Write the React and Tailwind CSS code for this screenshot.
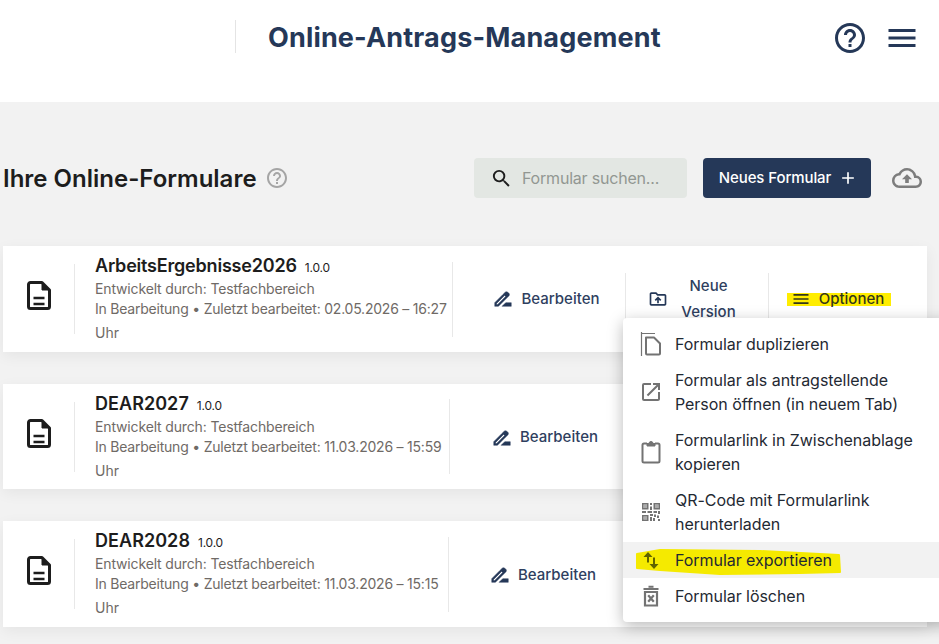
import React from 'react';
import {
  MdAdd,
  MdHelpOutline,
  MdMenu,
  MdOpenInNew,
  MdOutlineCloudUpload,
  MdOutlineDriveFolderUpload,
  MdSearch
} from 'react-icons/md';

const forms = [
  {
    name: 'ArbeitsErgebnisse2026',
    edited: '02.05.2026 – 16:27',
    card: 'h-[106px]',
    textCol: 'w-[378px]',
    editCol: 'w-[172px] pl-[14px]',
    nameTrack: 'tracking-[-0.2px]'
  },
  {
    name: 'DEAR2027',
    edited: '11.03.2026 – 15:59',
    card: 'h-[105px]',
    textCol: 'w-[375px]',
    editCol: 'w-[175px] pl-[14px] pt-[2px]',
    nameTrack: 'tracking-[0.05px]'
  },
  {
    name: 'DEAR2028',
    edited: '11.03.2026 – 15:15',
    card: 'h-[106px]',
    textCol: 'w-[374px]',
    editCol: 'w-[176px] pl-[11px] pt-[2px]',
    nameTrack: 'tracking-[0.05px]'
  }
];

const DocIcon = () => (
  <svg viewBox="0 0 24 29" className="h-[29px] w-6 text-[#1d1d1d]" fill="none" stroke="currentColor">
    <path d="M3.5 1.5H15L22.5 9V25.5A2 2 0 0 1 20.5 27.5H3.5A2 2 0 0 1 1.5 25.5V3.5A2 2 0 0 1 3.5 1.5Z" strokeWidth="3" strokeLinejoin="round" />
    <path d="M15 2V9H22Z" fill="currentColor" strokeWidth="1" />
    <path d="M6.5 17H17.5M6.5 23H17.5" strokeWidth="2.4" />
  </svg>
);

const PenIcon = () => (
  <svg viewBox="0 0 24 24" className="h-[22px] w-[22px] text-[#253858]" fill="currentColor" stroke="currentColor" strokeWidth="0.5">
    <path fillRule="evenodd" d="M18.41 5.8L17.2 4.59c-.78-.78-2.05-.78-2.83 0l-2.68 2.68L3 15.96V20h4.04l8.74-8.74 2.63-2.63c.79-.78.79-2.05 0-2.83zM6.21 18H5v-1.21l8.66-8.66 1.21 1.21L6.21 18z" />
    <path d="M11 20l4-4h6v4H11z" />
  </svg>
);

const CopyIcon = ({ className }) => (
  <svg viewBox="0 0 24 24" className={className} fill="none" stroke="currentColor">
    <path d="M2.5 0V24M2.5 1.5H16" strokeWidth="1.2" />
    <path d="M7 5.5H15L21 11.5V21.5A1 1 0 0 1 20 22.5H8A1 1 0 0 1 7 21.5Z" strokeWidth="2" strokeLinejoin="round" />
  </svg>
);

const ClipboardIcon = ({ className }) => (
  <svg viewBox="0 0 24 24" className={className} fill="none" stroke="currentColor">
    <path d="M8 3.5H5A1.5 1.5 0 0 0 3.5 5V21A1.5 1.5 0 0 0 5 22.5H19A1.5 1.5 0 0 0 20.5 21V5A1.5 1.5 0 0 0 19 3.5H16" strokeWidth="2" />
    <path d="M8 6V3.5H10A2 2 0 0 1 14 3.5H16V6Z" fill="currentColor" strokeWidth="1" strokeLinejoin="round" />
  </svg>
);

const QrIcon = ({ className }) => (
  <svg viewBox="0 0 24 24" className={className} fill="currentColor">
    <path fillRule="evenodd" d="M3 3H9.5V9.5H3ZM4.5 4.5V8H8V4.5Z M14.5 3H21V9.5H14.5ZM16 4.5V8H19.5V4.5Z M3 15H9.5V21H3ZM4.5 16.5V19.5H8V16.5Z" />
    <path opacity="0.6" d="M4.5 4.5H8V8H4.5ZM16 4.5H19.5V8H16ZM4.5 16.5H8V19.5H4.5Z" />
    <path d="M11 3H13V5H11ZM11 6.5H13V10H11ZM3 11H7V13H3ZM8.5 11H13V13H8.5ZM14.5 11H18V13H14.5ZM19 11H21V14H19ZM11 14H14V16H11ZM11 17H13V21H11ZM15 14.5H17V17H15ZM14 18H16V21H14ZM18 15.5H20V18H18ZM19 19H21V21H19Z" />
  </svg>
);

const SortIcon = ({ className }) => (
  <svg viewBox="0 0 24 24" className={className} fill="currentColor">
    <path d="M9 4L13.5 9H10V14.5H8V9H4.5Z" />
    <path d="M15 21L10.5 16H14V9.5H16V16H19.5Z" />
  </svg>
);

const TrashIcon = ({ className }) => (
  <svg viewBox="0 0 24 24" className={className} fill="none" stroke="currentColor">
    <path d="M4.5 5H19.5M9.5 2.8H14.5" strokeWidth="2" />
    <path d="M6 8H18V21.5H6Z" strokeWidth="2.2" />
    <path d="M9.2 11.2L14.8 17.8M14.8 11.2L9.2 17.8" strokeWidth="2.2" />
  </svg>
);

const menuItems = [
  { icon: CopyIcon, lines: ['Formular duplizieren'], row: 'h-[36px]' },
  { icon: MdOpenInNew, lines: ['Formular als antragstellende', 'Person öffnen (in neuem Tab)'], row: 'h-[60px]' },
  { icon: ClipboardIcon, lines: ['Formularlink in Zwischenablage', 'kopieren'], row: 'h-[60px]' },
  { icon: QrIcon, lines: ['QR-Code mit Formularlink', 'herunterladen'], row: 'h-[60px]' },
  { icon: SortIcon, lines: ['Formular exportieren'], row: 'h-[36px] bg-[#f2f2f2]', marked: true },
  { icon: TrashIcon, lines: ['Formular löschen'], row: 'h-[36px]' }
];

const FormCard = ({ form }) => (
  <div className={`flex items-center bg-white shadow-[0_4px_14px_rgba(0,0,0,0.06)] ${form.card}`}>
    <div className="flex h-[70px] w-[72px] shrink-0 items-center justify-center border-r border-[#e8e8e8] pb-[7px]">
      <DocIcon />
    </div>
    <div className={`flex h-[75px] shrink-0 flex-col justify-center whitespace-nowrap border-r border-[#e8e8e8] pl-5 ${form.textCol}`}>
      <div className="flex items-baseline gap-2 leading-[22px]">
        <span className={`text-[18px] font-semibold text-[#1d1d1d] ${form.nameTrack}`}>{form.name}</span>
        <span className="text-[12px] tracking-[-0.2px] text-[#1d1d1d]">1.0.0</span>
      </div>
      <p className="text-[14px] leading-[20px] tracking-[-0.15px] text-[#6f6a66]">Entwickelt durch: Testfachbereich</p>
      <p className="text-[14px] leading-[20px] tracking-[-0.22px] text-[#6f6a66]">
        In Bearbeitung • Zuletzt bearbeitet: {form.edited}
      </p>
      <p className="mt-1 text-[14px] leading-[20px] text-[#6f6a66]">Uhr</p>
    </div>
    <div className={`flex h-[75px] shrink-0 items-center justify-center gap-[7px] text-[15px] font-medium text-[#2f3f5f] ${form.editCol}`}>
      <PenIcon />
      Bearbeiten
    </div>
    <div className="flex h-[52px] w-[144px] shrink-0 items-center justify-center gap-3 border-x border-[#e8e8e8] pr-[9px] text-[15px] font-medium text-[#2f3f5f]">
      <MdOutlineDriveFolderUpload className="h-5 w-5 text-[#253858]" />
      <span className="w-[58px] text-center leading-[26px]">Neue Version</span>
    </div>
    <div className="flex flex-1 items-center justify-center pr-[18px]">
      <span className="flex h-[13px] items-center gap-2 bg-[#ffed00] px-[4px] text-[15px] font-medium text-[#33371a]">
        <MdMenu className="h-5 w-5" />
        <span className="pr-[3px]">Optionen</span>
      </span>
    </div>
  </div>
);

const OptionsMenu = () => (
  <div className="absolute left-[623px] top-[318px] w-[330px] rounded bg-white py-2 shadow-[0_4px_16px_rgba(0,0,0,0.28)]">
    {menuItems.map((item) => {
      const Icon = item.icon;
      return (
        <div key={item.lines[0]} className={`relative flex items-center pl-[16px] text-[16px] leading-[24px] text-[#1f2933] ${item.row}`}>
          {/* hand-drawn marker over the export row */}
          {item.marked && (
            <svg viewBox="0 0 230 36" className="absolute left-0 top-0 h-9 w-[230px]" fill="#f5ea00" stroke="#f5ea00" strokeWidth="2" strokeLinejoin="round">
              <path d="M14 12L37 8L137 9L216 13L217 30L177 31L97 32L37 28L14 26Z" />
            </svg>
          )}
          <span className="relative flex w-9 shrink-0">
            <Icon className={item.marked ? 'h-6 w-6 text-[#5f6300]' : 'h-6 w-6 text-[#737373]'} />
          </span>
          <div className="relative tracking-[-0.05px]">
            {item.lines.map((line) => (
              <p key={line}>{line}</p>
            ))}
          </div>
        </div>
      );
    })}
  </div>
);

const App = () => {
  return (
    <div className="relative h-[644px] w-[939px] overflow-hidden bg-[#f2f2f2] font-['Inter',sans-serif]">
      {/* Header */}
      <header className="flex h-[102px] items-start bg-white pl-[235px] pr-[19px] pt-5">
        <div className="flex h-[33px] items-center border-l border-[#e4e4e4] pl-8">
          <h1 className="pt-[2px] text-[27px] font-bold leading-none tracking-[0.16px] text-[#253858]">Online-Antrags-Management</h1>
        </div>
        <div className="ml-auto flex items-center gap-4">
          <MdHelpOutline className="h-9 w-9 text-[#253858]" />
          <MdMenu className="h-9 w-9 text-[#253858]" />
        </div>
      </header>

      {/* Toolbar */}
      <div className="mt-14 flex h-[40px] items-center pl-[3px] pr-[17px]">
        <h2 className="pt-[2px] text-[24px] font-semibold text-[#1d1d1d]">Ihre Online-Formulare</h2>
        <MdHelpOutline className="ml-2 h-6 w-6 text-[#a5a5a5]" />
        <div className="ml-auto flex h-10 w-[213px] items-center gap-[9px] rounded bg-[#e3e7e3] pl-[16px]">
          <MdSearch className="h-[23px] w-[23px] text-[#1d1d1d]" />
          <span className="text-[16px] tracking-[-0.2px] text-[#929792]">Formular suchen...</span>
        </div>
        <button className="ml-4 flex h-10 w-[168px] items-center justify-center gap-[7px] rounded bg-[#253858] pl-[3px] text-[15px] font-medium tracking-[-0.1px] text-white">
          Neues Formular
          <MdAdd className="h-5 w-5" />
        </button>
        <MdOutlineCloudUpload className="ml-[21px] h-[30px] w-[30px] text-[#7d7d7d]" />
      </div>

      {/* Form list */}
      <div className="ml-[3px] mt-12 flex w-[924px] flex-col gap-8">
        {forms.map((form) => (
          <FormCard key={form.name} form={form} />
        ))}
      </div>

      <OptionsMenu />
    </div>
  );
};

export default App;
